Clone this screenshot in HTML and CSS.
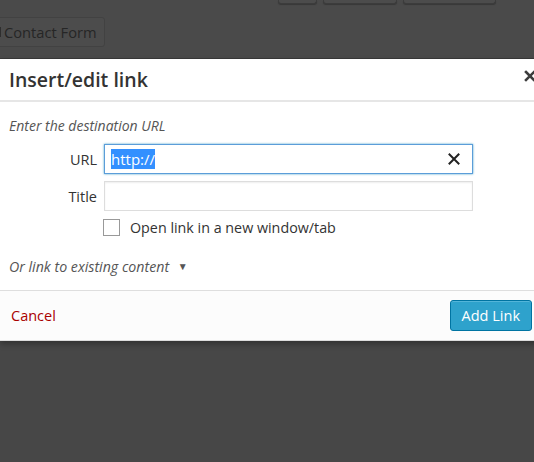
FILE: index.html
```html
<!DOCTYPE html>
<html>
<head>
<meta charset="utf-8">
<link rel="stylesheet" href="styles.css">
</head>
<body>
<div class="backdrop-top">
  <div class="toolbar">
    <span class="tb-btn tb-a"></span>
    <span class="tb-btn tb-b"></span>
    <span class="tb-btn tb-c"></span>
  </div>
  <div class="cf-row">
    <span class="cf-btn"><span class="cf-icon"></span>Contact Form</span>
  </div>
</div>
<div class="dialog">
  <div class="dlg-head">
    <h1 class="dlg-title">Insert/edit link</h1>
    <svg class="dlg-close" width="12" height="12" viewBox="0 0 12 12"><path d="M2 2 L10 10 M10 2 L2 10" stroke="#3c3c3c" stroke-width="2.6" stroke-linecap="square"/></svg>
  </div>
  <div class="dlg-body">
    <p class="hint">Enter the destination URL</p>
    <div class="field">
      <label class="lbl">URL</label>
      <div class="input focus"><span class="sel">http://</span>
        <svg class="clear" width="12" height="12" viewBox="0 0 12 12"><path d="M1.5 1.5 L10.5 10.5 M10.5 1.5 L1.5 10.5" stroke="#222" stroke-width="2" stroke-linecap="square"/></svg>
      </div>
    </div>
    <div class="field">
      <label class="lbl">Title</label>
      <div class="input"></div>
    </div>
    <div class="check-row">
      <span class="checkbox"></span>
      <span class="check-text">Open link in a new window/tab</span>
    </div>
    <p class="existing">Or link to existing content <span class="tri">▼</span></p>
  </div>
  <div class="dlg-foot">
    <a class="cancel">Cancel</a>
    <span class="add-btn">Add Link</span>
  </div>
</div>
</body>
</html>
```
FILE: styles.css
```css
html, body {
  margin: 0;
  padding: 0;
}
body {
  width: 534px;
  height: 462px;
  overflow: hidden;
  background: #474747;
  font-family: "Open Sans", "Noto Sans", sans-serif;
}
.backdrop-top {
  height: 59px;
  background: #4a4a4a;
  border-bottom: 1px solid #3a3a3a;
  box-sizing: border-box;
}
.toolbar {
  display: flex;
  height: 3px;
  padding-left: 278px;
  gap: 6px;
}
.tb-btn {
  display: block;
  height: 3px;
  border: 1px solid #3c3c3c;
  border-top: none;
  border-radius: 0 0 3px 3px;
  background: #4c4c4c;
  box-shadow: 0 1px 1px rgba(0,0,0,0.25);
}
.tb-a { width: 37px; }
.tb-b { width: 72px; }
.tb-c { width: 91px; }
.cf-row {
  padding-top: 14px;
}
.cf-btn {
  display: inline-flex;
  align-items: center;
  height: 30px;
  padding: 0 7px 0 0;
  margin-left: -9px;
  border: 1px solid #424242;
  border-radius: 3px;
  background: #4c4c4c;
  color: #262626;
  font-size: 14.7px;
  box-sizing: border-box;
}
.cf-icon {
  display: inline-block;
  width: 2px;
  height: 10px;
  background: #2e2e2e;
  margin: 0 3px 0 7px;
}
.dialog {
  width: 560px;
  background: #fff;
  box-shadow: 0 3px 6px rgba(0,0,0,0.3);
}
.dlg-head {
  position: relative;
  height: 41px;
  border-bottom: 2px solid #e6e6e6;
  display: flex;
  align-items: center;
}
.dlg-title {
  margin: 0 0 0 9px;
  font-size: 19.5px;
  font-weight: 600;
  color: #333;
}
.dlg-close {
  position: absolute;
  left: 524px;
  top: 11px;
}
.dlg-body {
  padding: 14px 0 0 0;
  height: 189px;
  box-sizing: border-box;
  border-bottom: 1px solid #dedede;
}
.hint {
  margin: 0 0 9px 9px;
  font-size: 14px;
  font-style: italic;
  color: #555;
}
.field {
  display: flex;
  align-items: center;
  margin-bottom: 7px;
}
.lbl {
  width: 104px;
  text-align: right;
  padding-right: 7px;
  box-sizing: border-box;
  font-size: 14.5px;
  color: #333;
}
.input {
  position: relative;
  width: 369px;
  height: 30px;
  border: 1px solid #ddd;
  box-shadow: inset 0 1px 2px rgba(0,0,0,0.07);
  box-sizing: border-box;
  display: flex;
  align-items: center;
  padding-left: 6px;
  font-size: 15px;
}
.input.focus {
  border-color: #5b9dd9;
  box-shadow: 0 0 2px rgba(30,140,190,0.8);
}
.sel {
  background: #3390ff;
  color: #fff;
  line-height: 20px;
}
.clear {
  position: absolute;
  right: 12px;
  top: 8px;
}
.check-row {
  display: flex;
  align-items: center;
  padding-left: 103px;
  margin-top: 0;
}
.checkbox {
  width: 17px;
  height: 17px;
  border: 1px solid #999;
  box-sizing: border-box;
  background: #fff;
  margin-right: 10px;
}
.check-text {
  font-size: 14.3px;
  color: #333;
}
.existing {
  margin: 20px 0 0 9px;
  font-size: 14.2px;
  font-style: italic;
  color: #555;
}
.tri {
  font-style: normal;
  font-size: 10px;
  margin-left: 5px;
  vertical-align: 2px;
}
.dlg-foot {
  height: 50px;
  background: #fcfcfc;
  display: flex;
  align-items: center;
  justify-content: space-between;
  padding: 0 28px 0 11px;
  border-bottom: 1px solid #ddd;
  box-sizing: border-box;
}
.cancel {
  color: #a00;
  font-size: 14.5px;
}
.add-btn {
  height: 31px;
  display: flex;
  align-items: center;
  padding: 0 11px 0 11px;
  background: #2ea2cc;
  border: 1px solid #0074a2;
  border-radius: 3px;
  color: #fff;
  font-size: 14.5px;
  box-sizing: border-box;
  box-shadow: inset 0 1px 0 rgba(120,200,230,0.5);
}
```
